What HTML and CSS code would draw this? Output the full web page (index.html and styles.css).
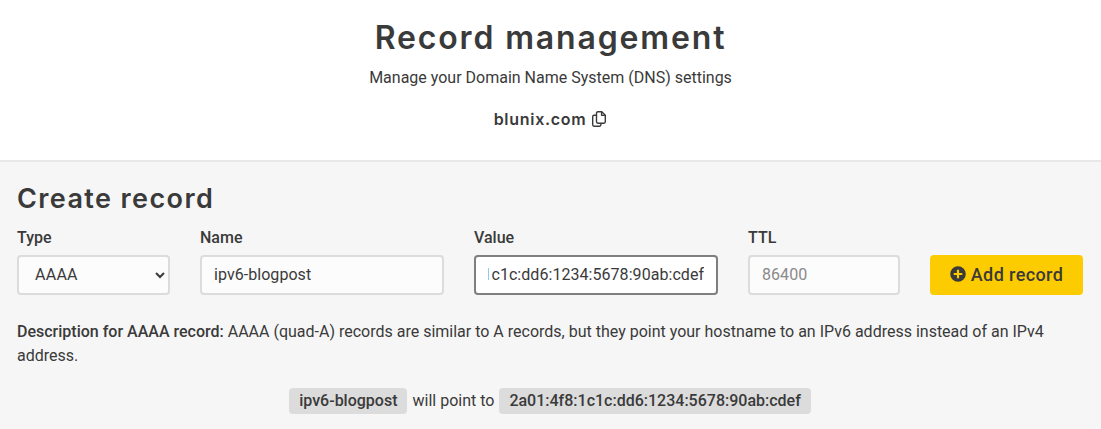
FILE: index.html
```html
<!DOCTYPE html>
<html lang="en">
<head>
<meta charset="utf-8">
<title>Record management</title>
<link rel="stylesheet" href="styles.css">
</head>
<body>
<header class="hero">
  <h1 class="hero-title">Record management</h1>
  <p class="hero-sub">Manage your Domain Name System (DNS) settings</p>
  <div class="domain">
    <span class="domain-name">blunix.com</span>
    <svg class="copy-icon" viewBox="0 0 16 16" width="16" height="16" fill="none" stroke="currentColor" stroke-width="1.4" stroke-linejoin="round"><path d="M5.500 2.200c0-.8.500-1.500 1.300-1.500h4l3.500 3.500v6.600c0 .8-.6 1.400-1.400 1.400H6.900c-.8 0-1.400-.6-1.400-1.400z"/><path d="M10.600.9v3.500h3.500"/><path d="M5.500 4.300H3c-.8 0-1.300.6-1.300 1.400v8.100c0 .8.500 1.400 1.300 1.400h5.600c.8 0 1.300-.6 1.300-1.400v-1.700"/></svg>
  </div>
</header>
<main class="panel">
  <h2 class="panel-title">Create record</h2>
  <form class="form-grid">
    <div class="field">
      <label class="field-label" for="type">Type</label>
      <select class="control control-select" id="type"><option>AAAA</option></select>
    </div>
    <div class="field">
      <label class="field-label" for="name">Name</label>
      <input class="control" id="name" type="text" value="ipv6-blogpost">
    </div>
    <div class="field">
      <label class="field-label" for="value">Value</label>
      <input class="control control-focus" id="value" type="text" value="2a01:4f8:1c1c:dd6:1234:5678:90ab:cdef">
    </div>
    <div class="field">
      <label class="field-label" for="ttl">TTL</label>
      <input class="control" id="ttl" type="text" placeholder="86400">
    </div>
    <div class="field field-action">
      <button class="add-btn" type="button">
        <svg class="add-icon" viewBox="0 0 16 16" width="16" height="16"><path fill="currentColor" fill-rule="evenodd" d="M8 .2a7.800 7.800 0 1 0 0 15.600A7.800 7.800 0 0 0 8 .2zM6.900 3.700h2.200v3.200h3.200v2.200H9.100v3.200H6.900V9.100H3.700V6.900h3.200z"/></svg>
        Add record
      </button>
    </div>
  </form>
  <p class="description"><strong>Description for AAAA record:</strong> AAAA (quad-A) records are similar to A records, but they point your hostname to an IPv6 address instead of an IPv4 address.</p>
  <p class="preview"><span class="tag">ipv6-blogpost</span><span>will point to</span><span class="tag">2a01:4f8:1c1c:dd6:1234:5678:90ab:cdef</span></p>
</main>
<script src="script.js"></script>
</body>
</html>
```
FILE: styles.css
```css
* { box-sizing: border-box; }
html, body { margin: 0; height: 100%; }
body {
  font-family: Roboto, "Liberation Sans", sans-serif;
  font-size: 16px;
  color: #3a3a3a;
  background: #f6f6f6;
  overflow: hidden;
}
.hero {
  background: #fff;
  height: 162px;
  border-bottom: 2px solid #e8e8e8;
  padding-top: 18px;
  text-align: center;
}
.hero-title {
  margin: 0;
  font-family: Inter, sans-serif;
  font-size: 32px;
  line-height: 40px;
  font-weight: 600;
  letter-spacing: 1.85px;
}
.hero-sub {
  margin: 9px 0 0;
  line-height: 22px;
}
.domain {
  margin-top: 18px;
  display: flex;
  justify-content: center;
  align-items: center;
  gap: 5px;
  height: 24px;
}
.domain-name {
  font-family: Inter, sans-serif;
  font-size: 16px;
  font-weight: 600;
  letter-spacing: 0.7px;
}
.copy-icon { display: block; }
.panel { padding: 19px 18px 0 17px; }
.panel-title {
  margin: 0;
  font-family: Inter, sans-serif;
  font-size: 27px;
  line-height: 36px;
  font-weight: 600;
  letter-spacing: 1.4px;
}
.form-grid {
  margin-top: 9px;
  display: grid;
  grid-template-columns: 153fr 244fr 244fr 152fr 153fr;
  column-gap: 30px;
}
.field { display: flex; flex-direction: column; min-width: 0; }
.field-action { justify-content: flex-end; }
.field-label {
  font-weight: 500;
  font-size: 16px;
  line-height: 24px;
  margin-bottom: 5px;
}
.control {
  width: 100%;
  height: 40px;
  border: 2px solid #dcdcdc;
  border-radius: 4px;
  background: #fcfcfc;
  padding: 0 12px 2px;
  font: 16px Roboto, sans-serif;
  letter-spacing: 0.05px;
  color: #3a3a3a;
  outline: none;
}
.control::placeholder { color: #8a8a8a; opacity: 1; }
.control-select { padding-left: 12px; letter-spacing: 0.25px; }
.control-focus { border-color: #7f7f7f; background: #fff; }
.add-btn {
  height: 40px;
  width: 100%;
  border: none;
  border-radius: 4px;
  background: #fdcc00;
  color: #3a3a3a;
  font: 500 18px Roboto, sans-serif;
  letter-spacing: 0.4px;
  display: flex;
  justify-content: center;
  align-items: center;
  gap: 5px;
  padding: 0 0 2px;
}
.description {
  margin: 25px 0 0;
  font-size: 16px;
  line-height: 24px;
}
.description strong { font-weight: 500; }
.preview {
  margin: 20px 0 0;
  display: flex;
  justify-content: center;
  align-items: center;
  gap: 5px;
  font-size: 16px;
  line-height: 26px;
}
.tag {
  background: #dcdcdc;
  border-radius: 4px;
  padding: 0 10px;
  font-weight: 500;
  font-size: 16px;
}
```
FILE: script.js
```js
var valueInput = document.getElementById("value");
valueInput.scrollLeft = valueInput.scrollWidth;
```
